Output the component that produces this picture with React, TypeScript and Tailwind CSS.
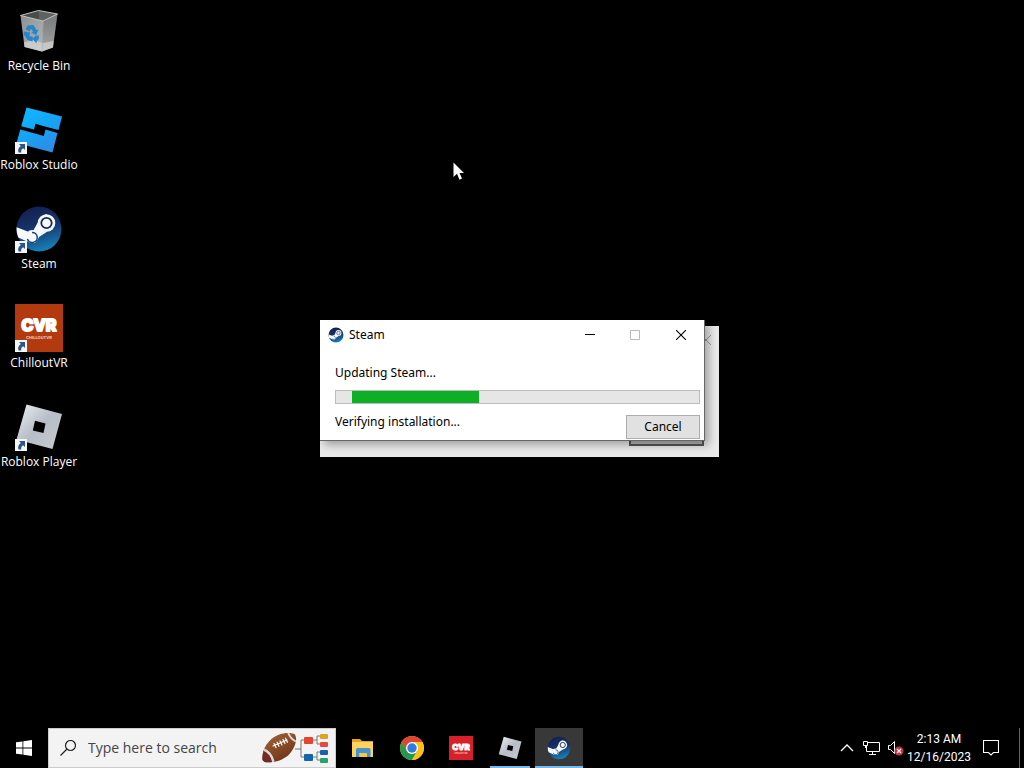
import React from "react";

type IconProps = { className?: string };

function RecycleBinIcon({ className }: IconProps) {
  return (
    <svg viewBox="0 0 48 48" className={className} aria-hidden="true">
      <defs>
        <linearGradient id="binLeft" x1="0" y1="0" x2="1" y2="1">
          <stop offset="0" stopColor="#8d8f90" />
          <stop offset="1" stopColor="#b4b6b7" />
        </linearGradient>
        <linearGradient id="binRight" x1="0" y1="0" x2="0" y2="1">
          <stop offset="0" stopColor="#77797a" />
          <stop offset="1" stopColor="#a5a6a6" />
        </linearGradient>
      </defs>
      <path d="M5.5 8.5 28 14 27 44.5 9.5 40Z" fill="url(#binLeft)" />
      <path d="M28 14 42.5 7 38 40.5 27 44.5Z" fill="url(#binRight)" />
      <path d="M5.5 8.5 23.5 3.5 42.5 7 28 14Z" fill="#4a4b4c" />
      <path d="M23.5 4 24 12.5 28 14 42 7Z" fill="#606162" />
      <path d="M9 35.5 18 33 27.5 36 38.5 34 38 40.5 27 44.5 9.5 40Z" fill="#dcdcdc" opacity=".65" />
      <path d="M5.5 8.5 23.5 3.5 42.5 7 28 14Z" fill="none" stroke="#c4c5c5" strokeWidth="1" />
      <path d="M28 14 27 44.5" stroke="#b4b5b5" strokeWidth=".8" />
      <g fill="#2586d0">
        <path d="M12.5 18.5 18.5 18 21.5 23 23.5 22.300 21.200 28 16.200 25.500 18 24.800 16 21.500 14.500 24.500 10.500 22Z" />
        <path d="M9 24.500 15 25.500 14.400 29 18 30 17.500 34.500 12.500 33 10 28.500 8.500 28.500Z" />
        <path d="M17.500 32 21.500 27.500 21.600 29.500 23.500 28 24 31.500 21.500 34.800 21.600 36.500Z" />
      </g>
    </svg>
  );
}

function RobloxStudioIcon({ className }: IconProps) {
  return (
    <svg viewBox="0 0 48 48" className={className} aria-hidden="true">
      <defs>
        <linearGradient id="studio" gradientUnits="userSpaceOnUse" x1="10" y1="2" x2="34" y2="46">
          <stop offset="0" stopColor="#10b8ff" />
          <stop offset=".4" stopColor="#12a8f6" />
          <stop offset="1" stopColor="#2f8ae6" />
        </linearGradient>
      </defs>
      <g fill="url(#studio)">
        <path d="M11.5 1.5 47 10.5 43.5 24 31.7 21 20.5 17.8 19 23.5 6.200 20.200Z" />
        <path d="M5.300 23.500 18.200 27 28.800 30 30.500 23.500 42.500 27 37.500 46.500 1.500 37Z" />
      </g>
    </svg>
  );
}

function RobloxIcon({ className }: IconProps) {
  return (
    <svg viewBox="0 0 48 48" className={className} aria-hidden="true">
      <defs>
        <linearGradient id="player" x1="0" y1="0" x2="1" y2="1">
          <stop offset="0" stopColor="#edf0f4" />
          <stop offset=".5" stopColor="#b7bdc6" />
          <stop offset="1" stopColor="#c8cbd0" />
        </linearGradient>
      </defs>
      <path d="M11.5 1.5 47 11 37.5 46 1.5 36.500Z" fill="url(#player)" />
      <path d="M20 17.800 30.500 20.500 28.500 30 17.800 27.500Z" fill="#000" />
    </svg>
  );
}

function SteamIcon({ className }: IconProps) {
  return (
    <svg viewBox="0 0 48 48" className={className} aria-hidden="true">
      <defs>
        <linearGradient id="steam" x1=".3" y1="0" x2=".6" y2="1">
          <stop offset="0" stopColor="#161c4b" />
          <stop offset=".5" stopColor="#14366f" />
          <stop offset="1" stopColor="#1989bd" />
        </linearGradient>
        <clipPath id="steamDisc">
          <circle cx="24" cy="24" r="22.500" />
        </clipPath>
      </defs>
      <g clipPath="url(#steamDisc)">
        <rect width="48" height="48" fill="url(#steam)" />
        <path d="M0 21.500 14 27 18 26 22.500 18 31 9 40 18 31 27.500 24 32 20 38 11 36 0 31Z" fill="#f6f8fb" />
        <circle cx="31.500" cy="18" r="8.800" fill="#f6f8fb" />
        <circle cx="31.500" cy="18" r="5.200" fill="#f6f8fb" stroke="#17295b" strokeWidth="1.800" />
        <circle cx="17" cy="31.500" r="6.500" fill="#f6f8fb" />
        <path d="M12.500 34A5 5 0 1 0 17 27.500" fill="none" stroke="#174579" strokeWidth="1.500" />
      </g>
    </svg>
  );
}

function ChilloutIcon({ className, fill }: IconProps & { fill: string }) {
  return (
    <svg viewBox="0 0 48 48" className={className} aria-hidden="true">
      <rect width="48" height="48" fill={fill} />
      <g fill="#fff" textAnchor="middle" fontFamily="Inter, sans-serif">
        <text x="24" y="27" fontSize="16" fontWeight="800" stroke="#fff" strokeWidth="2" strokeLinejoin="round">
          CVR
        </text>
        <text x="24" y="35" fontSize="4" fontWeight="700" opacity=".75">
          CHILLOUTVR
        </text>
      </g>
    </svg>
  );
}

function ShortcutBadge() {
  return (
    <svg viewBox="0 0 12 12" className="absolute bottom-0 left-0 size-3" aria-hidden="true">
      <rect width="12" height="12" fill="#f4f6f8" />
      <path d="M4 2H10V8L8.200 6.200C6.500 7 6 8.200 6.200 10.500H3.500C2.600 7.500 3.600 5.400 5.900 3.900Z" fill="#2c5488" />
    </svg>
  );
}

function FolderIcon({ className }: IconProps) {
  return (
    <svg viewBox="0 0 24 24" className={className} aria-hidden="true">
      <path d="M1 3H9L11 5H22V21H1Z" fill="#e4a322" />
      <path d="M1 6H22V21H1Z" fill="#fcd45c" />
      <path d="M5 13.500Q5 12 6.500 12H18Q19.500 12 19.500 13.500V21H16V17H8.500V21H5Z" fill="#4593cf" />
      <path d="M8.500 17H16V21H8.500Z" fill="#f5c749" />
    </svg>
  );
}

function ChromeIcon({ className }: IconProps) {
  return (
    <svg viewBox="0 0 24 24" className={className} aria-hidden="true">
      <circle cx="12" cy="12" r="12" fill="#fbc116" />
      <path d="M1.610 6A12 12 0 0 1 22.390 6H12L6.800 15Z" fill="#dd4535" />
      <path d="M1.610 6A12 12 0 0 0 12 24L17.200 15 6.800 15Z" fill="#26974e" />
      <path d="M22.390 6A12 12 0 0 1 12 24L17.200 15 12 6Z" fill="#fbc116" />
      <circle cx="12" cy="12" r="6" fill="#fff" />
      <circle cx="12" cy="12" r="4.700" fill="#2f7de0" />
    </svg>
  );
}

function FootballArt({ className }: IconProps) {
  return (
    <svg viewBox="0 0 68 32" className={className} aria-hidden="true">
      <defs>
        <clipPath id="ball">
          <path d="M1.500 28C.5 18 7 7 17 3 24 .4 31 .5 34 2.500 37.500 9 32 20 25 25 18 30 8 31 3.500 30Z" />
        </clipPath>
        <linearGradient id="leather" x1="0" y1="0" x2=".6" y2="1">
          <stop offset="0" stopColor="#a9693c" />
          <stop offset="1" stopColor="#693014" />
        </linearGradient>
      </defs>
      <g clipPath="url(#ball)">
        <rect width="38" height="34" fill="url(#leather)" />
        <path d="M0 16 Q11 20 14 33H0Z" fill="#702c27" />
        <path d="M1 17Q11 20 13 32" stroke="#ddd8d7" strokeWidth="2.500" fill="none" />
        <path d="M27 0Q29 7 36 10" stroke="#ddd8d7" strokeWidth="2" fill="none" />
      </g>
      <path d="M12 14 26 8M13 11.500l2 4M16 10.200l2 4M19 9l2 4M22 7.500l2 4M24.500 6.200l2 4" stroke="#fff" strokeWidth="1.200" strokeLinecap="round" />
      <path d="M34 17H40M48 8H40V25H48M51 8H56M61 4H56V12H61M51 25H56M61 20H56V28H61" fill="none" stroke="#777" strokeWidth="1" />
      <rect x="43" y="5" width="9" height="7" rx="1" fill="#e8432d" />
      <rect x="43" y="22" width="9" height="7" rx="1" fill="#1464b0" />
      <rect x="59" y="2" width="8" height="5" rx="1" fill="#dfa323" />
      <rect x="59" y="10" width="8" height="5" rx="1" fill="#e64a40" />
      <rect x="59" y="18" width="8" height="5" rx="1" fill="#1763ab" />
      <rect x="59" y="26" width="8" height="5" rx="1" fill="#23a46c" />
    </svg>
  );
}

const shortcuts = [
  { label: "Recycle Bin", icon: <RecycleBinIcon className="size-12" />, linked: false },
  { label: "Roblox Studio", icon: <RobloxStudioIcon className="size-12" />, linked: true },
  { label: "Steam", icon: <SteamIcon className="size-12" />, linked: true },
  { label: "ChilloutVR", icon: <ChilloutIcon className="size-12" fill="#b33a0f" />, linked: true },
  { label: "Roblox Player", icon: <RobloxIcon className="size-12" />, linked: true },
];

const apps = [
  { name: "File Explorer", icon: <FolderIcon className="size-6" />, state: "idle" },
  { name: "Google Chrome", icon: <ChromeIcon className="size-6" />, state: "idle" },
  { name: "ChilloutVR", icon: <ChilloutIcon className="size-6" fill="#d8202a" />, state: "idle" },
  { name: "Roblox Player", icon: <RobloxIcon className="size-6" />, state: "open" },
  { name: "Steam", icon: <SteamIcon className="size-6" />, state: "active" },
];

function BackWindow() {
  return (
    <section
      aria-label="Background window"
      className="absolute top-[326px] left-80 flex h-[131px] w-[399px] flex-col items-end justify-between bg-[#e9e9e9] pr-2"
    >
      <svg viewBox="0 0 10 10" className="mt-[9px] size-[10px]" aria-hidden="true">
        <path d="M0 0 10 10M10 0 0 10" stroke="#999" strokeWidth="1" />
      </svg>
      <div className="mr-[7px] mb-[11px] h-6 w-[75px] border-2 border-[#555] bg-[#b5b5b5]" />
    </section>
  );
}

function SteamDialog() {
  return (
    <section
      role="dialog"
      aria-labelledby="dialog-title"
      className="absolute top-80 left-80 w-[385px] border-r border-b border-[#666] bg-white font-['Noto_Sans','Open_Sans',sans-serif] text-xs text-black shadow-[4px_4px_8px_rgba(0,0,0,0.3)]"
    >
      <header className="flex h-[30px] items-center pl-2">
        <SteamIcon className="size-4" />
        <h1 id="dialog-title" className="ml-[5px] flex-1">
          Steam
        </h1>
        <button type="button" aria-label="Minimize" className="flex h-7 w-11 items-center justify-center">
          <svg viewBox="0 0 10 10" className="size-[10px]" aria-hidden="true">
            <path d="M0 4.500H10" stroke="#000" />
          </svg>
        </button>
        <button type="button" aria-label="Maximize" disabled className="flex h-7 w-[46px] items-center justify-center">
          <svg viewBox="0 0 10 10" className="size-[10px]" aria-hidden="true">
            <path d="M.5.5H9.500V9.500H.5Z" fill="none" stroke="#bbb" />
          </svg>
        </button>
        <button type="button" aria-label="Close" className="flex h-7 w-[46px] items-center justify-center">
          <svg viewBox="0 0 10 10" className="size-[10px]" aria-hidden="true">
            <path d="M0 0 10 10M10 0 0 10" stroke="#000" strokeWidth="1.100" />
          </svg>
        </button>
      </header>
      <div className="pt-[15px] pr-1 pl-[15px]">
        <p id="update-label" className="leading-4">
          Updating Steam...
        </p>
        <div
          role="progressbar"
          aria-labelledby="update-label"
          className="mt-[9px] h-[14px] border border-[#bcbcbc] bg-[#e6e6e6] pl-4"
        >
          <div className="h-full w-[127px] bg-[#0db024]" />
        </div>
        <div className="flex items-start justify-between pb-px">
          <p className="mt-[10px] leading-4">Verifying installation...</p>
          <button type="button" className="mt-[11px] h-6 w-[74px] border border-[#adadad] bg-[#e1e1e1]">
            Cancel
          </button>
        </div>
      </div>
    </section>
  );
}

function Tray() {
  return (
    <div className="ml-auto flex items-center text-white">
      <button type="button" aria-label="Show hidden icons" className="flex h-10 w-6 items-center justify-center">
        <svg viewBox="0 0 14 8" className="h-2 w-[14px]" fill="none" aria-hidden="true">
          <path d="M1 7 7 1 13 7" stroke="currentColor" strokeWidth="1.300" />
        </svg>
      </button>
      <button type="button" aria-label="Network" className="flex h-10 w-6 items-center justify-center">
        <svg viewBox="0 0 17 14" className="h-[14px] w-[17px]" fill="none" stroke="currentColor" aria-hidden="true">
          <path d="M5 1.500H16.500V10.500H3.500V5M9.500 10.500V13M6 13.500H13M.5.500H4.500V4.500H.5ZM2.500 4.500V7" />
        </svg>
      </button>
      <button type="button" aria-label="Volume muted" className="flex h-10 w-6 items-center justify-center">
        <svg viewBox="0 0 17 16" className="h-4 w-[17px]" fill="none" aria-hidden="true">
          <path d="M1.500 5.500H3.500L7.500 1.500V13.500L3.500 9.500H1.500Z" stroke="currentColor" />
          <circle cx="12" cy="11" r="4.500" fill="#c83040" />
          <path d="m10 9 4 4m0-4-4 4" stroke="#fff" strokeWidth="1.200" />
        </svg>
      </button>
      <button
        type="button"
        className="flex w-16 flex-col items-center font-[Roboto,sans-serif] text-xs leading-[18px] whitespace-nowrap"
      >
        <span>2:13 AM</span>
        <span>12/16/2023</span>
      </button>
      <button type="button" aria-label="Notifications" className="flex h-10 w-10 items-center justify-center">
        <svg viewBox="0 0 16 16" className="size-4" fill="none" stroke="currentColor" aria-hidden="true">
          <path d="M.5.500H15.500V12.500H10.500L8 15 5.500 12.500H.5Z" strokeWidth="1.100" />
        </svg>
      </button>
      <button type="button" aria-label="Show desktop" className="ml-2 h-10 w-[5px] border-l border-[#666]" />
    </div>
  );
}

export default function App() {
  return (
    <div className="flex min-h-screen flex-col bg-black font-['Open_Sans','Noto_Sans',sans-serif]">
      <main className="relative flex-1">
        <nav aria-label="Desktop" className="flex w-[78px] flex-col gap-8 pt-[7px]">
          {shortcuts.map((s) => (
            <button key={s.label} type="button" className="flex flex-col items-center gap-[3px] text-white">
              <span className="relative">
                {s.icon}
                {s.linked && <ShortcutBadge />}
              </span>
              <span className="text-xs leading-4 whitespace-nowrap">{s.label}</span>
            </button>
          ))}
        </nav>
        <BackWindow />
        <SteamDialog />
        <svg viewBox="0 0 12 19" className="absolute top-[162px] left-[453px] h-[19px] w-3" aria-hidden="true">
          <path d="M.5.500V15L4 11.800 6.500 17.700 9 16.600 6.500 11H11Z" fill="#fff" />
        </svg>
      </main>
      <footer className="flex h-10 items-center">
        <button type="button" aria-label="Start" className="flex h-10 w-12 items-center justify-center">
          <svg viewBox="0 0 16 16" className="size-4" fill="#fff" aria-hidden="true">
            <path d="M0 2.300 6.500 1.400V7.500H0ZM7.300 1.300 16 0V7.500H7.300ZM0 8.400H6.500V14.600L0 13.700ZM7.300 8.400H16V16L7.300 14.700Z" />
          </svg>
        </button>
        <label className="flex h-10 w-72 items-center border border-[#ccc] bg-[#f3f3f3] pr-[6px] pl-[11px]">
          <svg viewBox="0 0 16 16" className="size-4 shrink-0" fill="none" stroke="#222" aria-hidden="true">
            <circle cx="10.500" cy="5.500" r="5" strokeWidth="1.200" />
            <path d="M7 9 .5 15.500" strokeWidth="1.300" />
          </svg>
          <input
            type="text"
            aria-label="Search"
            placeholder="Type here to search"
            className="ml-3 min-w-0 flex-1 bg-transparent text-sm text-[#444] outline-none placeholder:text-[#444]"
          />
          <FootballArt className="h-8 w-[68px] shrink-0" />
        </label>
        <div className="ml-[3px] flex gap-px">
          {apps.map((a) => (
            <button
              key={a.name}
              type="button"
              aria-label={a.name}
              className={
                a.state === "active"
                  ? "flex h-10 w-12 items-center justify-center border-b-2 border-[#76b9ed] bg-[#383838] pt-[2px]"
                  : "flex h-10 w-12 flex-col items-center justify-center"
              }
            >
              {a.state === "open" ? (
                <span className="flex h-10 w-10 items-center justify-center border-b-2 border-[#76b9ed] pt-[2px]">
                  {a.icon}
                </span>
              ) : (
                a.icon
              )}
            </button>
          ))}
        </div>
        <Tray />
      </footer>
    </div>
  );
}
